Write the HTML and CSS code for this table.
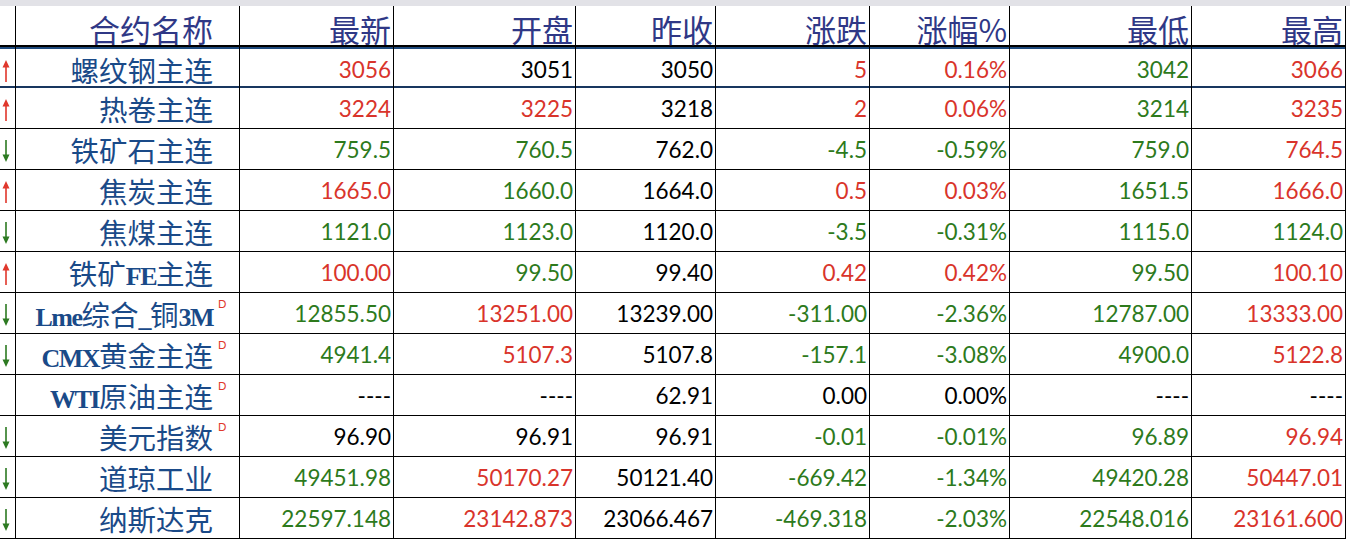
FILE: index.html
```html
<!DOCTYPE html>
<html lang="zh-CN">
<head>
<meta charset="utf-8">
<title>行情</title>
<link rel="stylesheet" href="styles.css">
</head>
<body>
<div class="band"></div>
<div class="sheet">
  <div class="row head">
    <div class="cell"></div>
    <div class="cell name">合约名称</div>
    <div class="cell">最新</div>
    <div class="cell">开盘</div>
    <div class="cell">昨收</div>
    <div class="cell">涨跌</div>
    <div class="cell">涨幅%</div>
    <div class="cell">最低</div>
    <div class="cell">最高</div>
  </div>

  <div class="row first">
    <div class="cell arrow"><svg class="up" viewBox="0 0 10 24" width="10" height="24"><rect x="4.2" y="7" width="1.6" height="16"/><path d="M1.5 8.5 L5 1 L8.5 8.5 Z"/></svg></div>
    <div class="cell name"><span class="nm">螺纹钢主连</span></div>
    <div class="cell num r">3056</div><div class="cell num k">3051</div><div class="cell num k">3050</div><div class="cell num r">5</div><div class="cell num r">0.16%</div><div class="cell num g">3042</div><div class="cell num r">3066</div>
  </div>

  <div class="row">
    <div class="cell arrow"><svg class="up" viewBox="0 0 10 24" width="10" height="24"><rect x="4.2" y="7" width="1.6" height="16"/><path d="M1.5 8.5 L5 1 L8.5 8.5 Z"/></svg></div>
    <div class="cell name"><span class="nm">热卷主连</span></div>
    <div class="cell num r">3224</div><div class="cell num r">3225</div><div class="cell num k">3218</div><div class="cell num r">2</div><div class="cell num r">0.06%</div><div class="cell num g">3214</div><div class="cell num r">3235</div>
  </div>

  <div class="row">
    <div class="cell arrow"><svg class="down" viewBox="0 0 10 24" width="10" height="24"><rect x="4.2" y="1" width="1.6" height="16"/><path d="M1.5 15.5 L5 23 L8.5 15.5 Z"/></svg></div>
    <div class="cell name"><span class="nm">铁矿石主连</span></div>
    <div class="cell num g">759.5</div><div class="cell num g">760.5</div><div class="cell num k">762.0</div><div class="cell num g">-4.5</div><div class="cell num g">-0.59%</div><div class="cell num g">759.0</div><div class="cell num r">764.5</div>
  </div>

  <div class="row">
    <div class="cell arrow"><svg class="up" viewBox="0 0 10 24" width="10" height="24"><rect x="4.2" y="7" width="1.6" height="16"/><path d="M1.5 8.5 L5 1 L8.5 8.5 Z"/></svg></div>
    <div class="cell name"><span class="nm">焦炭主连</span></div>
    <div class="cell num r">1665.0</div><div class="cell num g">1660.0</div><div class="cell num k">1664.0</div><div class="cell num r">0.5</div><div class="cell num r">0.03%</div><div class="cell num g">1651.5</div><div class="cell num r">1666.0</div>
  </div>

  <div class="row">
    <div class="cell arrow"><svg class="down" viewBox="0 0 10 24" width="10" height="24"><rect x="4.2" y="1" width="1.6" height="16"/><path d="M1.5 15.5 L5 23 L8.5 15.5 Z"/></svg></div>
    <div class="cell name"><span class="nm">焦煤主连</span></div>
    <div class="cell num g">1121.0</div><div class="cell num g">1123.0</div><div class="cell num k">1120.0</div><div class="cell num g">-3.5</div><div class="cell num g">-0.31%</div><div class="cell num g">1115.0</div><div class="cell num g">1124.0</div>
  </div>

  <div class="row">
    <div class="cell arrow"><svg class="up" viewBox="0 0 10 24" width="10" height="24"><rect x="4.2" y="7" width="1.6" height="16"/><path d="M1.5 8.5 L5 1 L8.5 8.5 Z"/></svg></div>
    <div class="cell name"><span class="nm">铁矿<span class="lat">FE</span>主连</span></div>
    <div class="cell num r">100.00</div><div class="cell num g">99.50</div><div class="cell num k">99.40</div><div class="cell num r">0.42</div><div class="cell num r">0.42%</div><div class="cell num g">99.50</div><div class="cell num r">100.10</div>
  </div>

  <div class="row">
    <div class="cell arrow"><svg class="down" viewBox="0 0 10 24" width="10" height="24"><rect x="4.2" y="1" width="1.6" height="16"/><path d="M1.5 15.5 L5 23 L8.5 15.5 Z"/></svg></div>
    <div class="cell name"><span class="nm d"><span class="lat">Lme</span>综合<span class="lat">_</span>铜<span class="lat">3M</span></span></div>
    <div class="cell num g">12855.50</div><div class="cell num r">13251.00</div><div class="cell num k">13239.00</div><div class="cell num g">-311.00</div><div class="cell num g">-2.36%</div><div class="cell num g">12787.00</div><div class="cell num r">13333.00</div>
  </div>

  <div class="row">
    <div class="cell arrow"><svg class="down" viewBox="0 0 10 24" width="10" height="24"><rect x="4.2" y="1" width="1.6" height="16"/><path d="M1.5 15.5 L5 23 L8.5 15.5 Z"/></svg></div>
    <div class="cell name"><span class="nm d"><span class="lat">CMX</span>黄金主连</span></div>
    <div class="cell num g">4941.4</div><div class="cell num r">5107.3</div><div class="cell num k">5107.8</div><div class="cell num g">-157.1</div><div class="cell num g">-3.08%</div><div class="cell num g">4900.0</div><div class="cell num r">5122.8</div>
  </div>

  <div class="row">
    <div class="cell arrow"></div>
    <div class="cell name"><span class="nm d"><span class="lat">WTI</span>原油主连</span></div>
    <div class="cell num k">----</div><div class="cell num k">----</div><div class="cell num k">62.91</div><div class="cell num k">0.00</div><div class="cell num k">0.00%</div><div class="cell num k">----</div><div class="cell num k">----</div>
  </div>

  <div class="row">
    <div class="cell arrow"><svg class="down" viewBox="0 0 10 24" width="10" height="24"><rect x="4.2" y="1" width="1.6" height="16"/><path d="M1.5 15.5 L5 23 L8.5 15.5 Z"/></svg></div>
    <div class="cell name"><span class="nm d">美元指数</span></div>
    <div class="cell num k">96.90</div><div class="cell num k">96.91</div><div class="cell num k">96.91</div><div class="cell num g">-0.01</div><div class="cell num g">-0.01%</div><div class="cell num g">96.89</div><div class="cell num r">96.94</div>
  </div>

  <div class="row">
    <div class="cell arrow"><svg class="down" viewBox="0 0 10 24" width="10" height="24"><rect x="4.2" y="1" width="1.6" height="16"/><path d="M1.5 15.5 L5 23 L8.5 15.5 Z"/></svg></div>
    <div class="cell name"><span class="nm">道琼工业</span></div>
    <div class="cell num g">49451.98</div><div class="cell num r">50170.27</div><div class="cell num k">50121.40</div><div class="cell num g">-669.42</div><div class="cell num g">-1.34%</div><div class="cell num g">49420.28</div><div class="cell num r">50447.01</div>
  </div>

  <div class="row">
    <div class="cell arrow"><svg class="down" viewBox="0 0 10 24" width="10" height="24"><rect x="4.2" y="1" width="1.6" height="16"/><path d="M1.5 15.5 L5 23 L8.5 15.5 Z"/></svg></div>
    <div class="cell name"><span class="nm">纳斯达克</span></div>
    <div class="cell num g">22597.148</div><div class="cell num r">23142.873</div><div class="cell num k">23066.467</div><div class="cell num g">-469.318</div><div class="cell num g">-2.03%</div><div class="cell num g">22548.016</div><div class="cell num r">23161.600</div>
  </div>
</div>
</body>
</html>
```

FILE: styles.css
```css
html, body {
  margin: 0;
  padding: 0;
  background: #ffffff;
}

.band {
  height: 6px;
  background: #e2e2e7;
}

.sheet {
  width: 1346px;
}

.row {
  display: grid;
  grid-template-columns: 16px 224px 154px 182px 140px 154px 140px 182px 154px;
  height: 41px;
  box-sizing: border-box;
  border-bottom: 1px solid #000;
}

.row.head {
  height: 41px;
  border-bottom: 2px solid #000;
}

.row.first {
  border-top: 2px solid #1f4b7e;
  border-bottom: 2px solid #18365f;
}

.cell {
  box-sizing: border-box;
  border-right: 1px solid #000;
  display: flex;
  align-items: center;
  justify-content: flex-end;
  padding-right: 2px;
  white-space: nowrap;
}

.cell.name {
  padding-right: 26px;
  padding-bottom: 2px;
  font-family: "Noto Sans CJK SC", sans-serif;
  font-size: 28.5px;
  color: #1a4a88;
}

.head .cell,
.head .cell.name {
  font-family: "Noto Sans CJK SC", sans-serif;
  font-size: 31px;
  color: #2f3886;
  padding-bottom: 5px;
}

.head .cell.name {
  padding-right: 26px;
}

.nm {
  position: relative;
}

.nm .lat {
  font-family: "Liberation Serif", serif;
  font-weight: bold;
  font-size: 26px;
  letter-spacing: -1.5px;
}

.nm.d::after {
  content: "D";
  position: absolute;
  left: 100%;
  top: 5px;
  margin-left: 5px;
  font-family: Lato, sans-serif;
  font-size: 11px;
  line-height: 1;
  color: #e0382c;
}

.cell.arrow {
  justify-content: flex-start;
  padding: 0 0 0 1px;
}

.arrow svg {
  display: block;
}

.up { fill: #e0372c; }
.down { fill: #2d7a22; }

.num {
  font-family: Lato, sans-serif;
  font-size: 22.5px;
  padding-bottom: 2px;
}

.r { color: #d9342b; }
.g { color: #2d7a1c; }
.k { color: #000000; }
```
